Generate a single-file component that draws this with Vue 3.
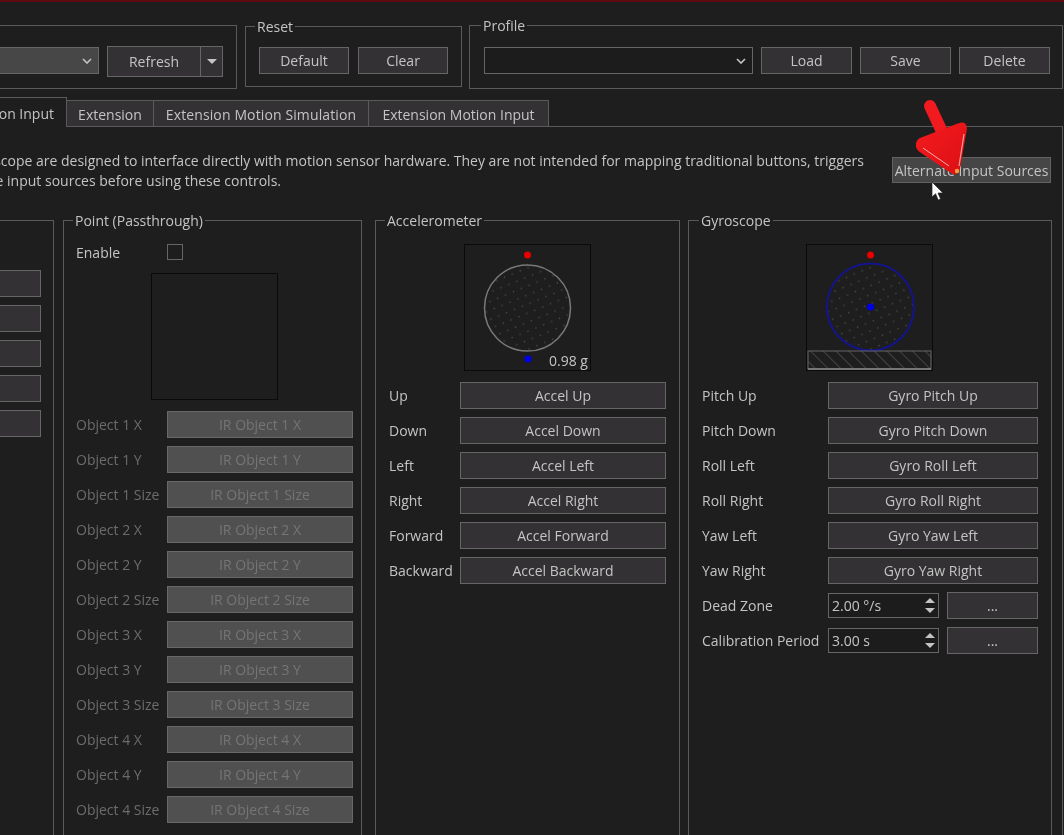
<template>
  <div class="app">
    <div class="top">
      <section class="group devices">
        <span class="title">Device</span>
        <div class="combo lit"><svg class="chev" width="10" height="6" viewBox="0 0 10 6"><polyline points="1,1 5,5 9,1" /></svg></div>
        <div class="split">
          <button class="btn split-main">Refresh</button>
          <button class="btn split-arrow"><svg width="10" height="5" viewBox="0 0 10 5"><polygon points="0,0 10,0 5,5" /></svg></button>
        </div>
      </section>
      <section class="group reset">
        <span class="title">Reset</span>
        <button class="btn">Default</button>
        <button class="btn">Clear</button>
      </section>
      <section class="group profile">
        <span class="title">Profile</span>
        <div class="combo"><svg class="chev" width="10" height="6" viewBox="0 0 10 6"><polyline points="1,1 5,5 9,1" /></svg></div>
        <button class="btn">Load</button>
        <button class="btn">Save</button>
        <button class="btn">Delete</button>
      </section>
    </div>

    <div class="tabs">
      <div class="tab active">Motion Input</div>
      <div class="tab w1">Extension</div>
      <div class="tab w2">Extension Motion Simulation</div>
      <div class="tab w3">Extension Motion Input</div>
    </div>

    <div class="pane">
      <div class="intro">
        <div class="copy">
          <div class="line l1">The Accelerometer and Gyroscope are designed to interface directly with motion sensor hardware. They are not intended for mapping traditional buttons, triggers</div>
          <div class="line l2">or axes. You might need to configure alternate input sources before using these controls.</div>
        </div>
        <button class="btn alt">Alternate Input Sources</button>
      </div>

      <div class="columns">
        <section class="group col-tilt">
          <div class="tilt-list">
            <button v-for="(t, i) in tiltRows" :key="i" class="btn tilt-btn">{{ t }}</button>
          </div>
        </section>

        <section class="group col-point">
          <span class="title">Point (Passthrough)</span>
          <div class="enable">
            <span class="lbl">Enable</span>
            <span class="check"></span>
          </div>
          <div class="vis point-vis"></div>
          <div class="rows">
            <div v-for="o in irRows" :key="o" class="row off">
              <span class="lbl">{{ o }}</span>
              <button class="btn" disabled>IR {{ o }}</button>
            </div>
          </div>
        </section>

        <section class="group col-accel">
          <span class="title">Accelerometer</span>
          <div class="vis">
            <svg width="125" height="125" viewBox="0 0 125 125">
              <defs>
                <pattern id="dotsA" width="13" height="11" patternUnits="userSpaceOnUse" patternTransform="rotate(18)">
                  <circle cx="2" cy="2" r=".7" fill="#565656" />
                  <circle cx="8.5" cy="7.5" r=".7" fill="#565656" />
                </pattern>
              </defs>
              <circle cx="62.5" cy="63" r="43" fill="url(#dotsA)" stroke="#787878" stroke-width="1.5" />
              <circle cx="62.5" cy="10" r="3.5" fill="#e80000" />
              <circle cx="63" cy="114" r="3.5" fill="#0000e8" />
            </svg>
            <span class="gval">0.98 g</span>
          </div>
          <div class="rows">
            <div v-for="r in accelRows" :key="r" class="row">
              <span class="lbl">{{ r }}</span>
              <button class="btn">Accel {{ r }}</button>
            </div>
          </div>
        </section>

        <section class="group col-gyro">
          <span class="title">Gyroscope</span>
          <div class="vis">
            <svg width="125" height="125" viewBox="0 0 125 125">
              <defs>
                <pattern id="dotsG" width="13" height="11" patternUnits="userSpaceOnUse" patternTransform="rotate(18)">
                  <circle cx="2" cy="2" r=".7" fill="#565656" />
                  <circle cx="8.5" cy="7.5" r=".7" fill="#565656" />
                </pattern>
                <pattern id="hatch" width="9" height="9" patternUnits="userSpaceOnUse" patternTransform="rotate(45)">
                  <line x1="0" y1="0" x2="9" y2="0" stroke="#5c5c5c" stroke-width="1.2" />
                </pattern>
              </defs>
              <circle cx="63.5" cy="62" r="43.5" fill="url(#dotsG)" stroke="#14148c" stroke-width="2" />
              <circle cx="63.5" cy="10" r="3.5" fill="#e80000" />
              <circle cx="63.5" cy="62" r="3.5" fill="#0000e8" />
              <rect x="1" y="106" width="123" height="18" fill="url(#hatch)" stroke="#666" />
              <line x1="1" y1="124" x2="124" y2="124" stroke="#888" stroke-width="1.5" />
            </svg>
          </div>
          <div class="rows">
            <div v-for="r in gyroRows" :key="r" class="row">
              <span class="lbl">{{ r }}</span>
              <button class="btn">Gyro {{ r }}</button>
            </div>
            <div v-for="s in spinRows" :key="s.label" class="row">
              <span class="lbl">{{ s.label }}</span>
              <div class="spin">
                {{ s.value }}
                <svg class="spin-arrows" width="10" height="15" viewBox="0 0 10 15">
                  <polygon points="5,0 10,5 0,5" />
                  <polygon points="0,10 10,10 5,15" />
                </svg>
              </div>
              <button class="btn more">...</button>
            </div>
          </div>
        </section>
      </div>
    </div>

    <svg class="pointer-arrow" width="60" height="84" viewBox="0 0 60 84">
      <defs>
        <linearGradient id="red" x1="0" y1="0" x2="1" y2="1">
          <stop offset="0" stop-color="#f41a1e" />
          <stop offset="1" stop-color="#dc1014" />
        </linearGradient>
      </defs>
      <line x1="14" y1="10" x2="29" y2="42" stroke="#f01a1f" stroke-width="12" stroke-linecap="round" />
      <path d="M4 44 Q-1 49 4 54 L35 75 Q40 79 42 74 L49 34 Q50 26 43 29 Z" fill="url(#red)" stroke="url(#red)" stroke-width="3.5" stroke-linejoin="round" />
      <path d="M7 52 L33 70" stroke="#ffb0b0" stroke-width="1" fill="none" />
      <path d="M48 38 L43 70" stroke="#ff9c9c" stroke-width="1.2" fill="none" />
      <circle cx="41" cy="75" r="2.2" fill="#e8a040" />
    </svg>

    <svg class="cursor" width="14" height="21" viewBox="0 0 14 21">
      <path d="M1 1 L1 16 L4.6 12.8 L7.2 19 L9.6 18 L7 12 L12 12 Z" fill="#fff" stroke="#222" stroke-width=".7" />
    </svg>
  </div>
</template>

<script setup>
const tiltRows = ['', '.', '.', '.', '.']
const accelRows = ['Up', 'Down', 'Left', 'Right', 'Forward', 'Backward']
const gyroRows = ['Pitch Up', 'Pitch Down', 'Roll Left', 'Roll Right', 'Yaw Left', 'Yaw Right']
const spinRows = [
  { label: 'Dead Zone', value: '2.00 °/s' },
  { label: 'Calibration Period', value: '3.00 s' },
]
const irRows = []
for (let i = 1; i <= 4; i++) {
  irRows.push(`Object ${i} X`, `Object ${i} Y`, `Object ${i} Size`)
}
</script>

<style>
html, body { background: #1e1e1e; overflow: hidden; }
</style>

<style scoped>
.app {
  position: relative;
  width: 1064px;
  height: 835px;
  overflow: hidden;
  box-sizing: border-box;
  border-top: 2px solid #5e0a10;
  background: #1e1e1e;
  color: #c4c4c4;
  font: 14px/19px "Open Sans", "Noto Sans", sans-serif;
  filter: blur(.35px);
}
.top { display: flex; margin: 23px 1px 0 -120px; height: 65px; }
.group { position: relative; box-sizing: border-box; border: 1px solid #5a5a5a; }
.title { position: absolute; top: -10px; left: 9px; padding: 0 2px; background: #1e1e1e; }
.btn {
  box-sizing: border-box;
  height: 27px;
  padding: 0;
  border: 1px solid #666;
  background: #333133;
  color: inherit;
  font: inherit;
  text-align: center;
}
.combo {
  position: relative;
  box-sizing: border-box;
  height: 27px;
  border: 1px solid #666;
  background: #1c1c1c;
}
.combo.lit { background: #474747; }
.chev { position: absolute; right: 6px; top: 10px; fill: none; stroke: #c4c4c4; stroke-width: 1.6; }

.devices { width: 357px; height: 64px; display: flex; gap: 8px; padding: 21px 13px 0 0; margin-right: 8px; }
.devices .combo { width: 219px; }
.split { display: flex; height: 31px; margin-top: -1px; }
.split .btn { height: 31px; }
.split-main { width: 94px; }
.split-arrow { width: 23px; margin-left: -1px; fill: #c4c4c4; display: flex; align-items: center; justify-content: center; }

.reset { width: 217px; height: 61px; margin: 1px 7px 0 0; display: flex; gap: 9px; padding: 20px 0 0 13px; }
.reset .btn { width: 90px; }
.profile { flex: 1; height: 64px; display: flex; gap: 8px; padding: 21px 0 0 14px; }
.profile .title { left: 11px; }
.profile .combo { width: 269px; }
.profile .btn { width: 91px; }

.tabs { display: flex; align-items: flex-end; margin: 8px 0 0 -120px; height: 29px; position: relative; z-index: 1; }
.tab { box-sizing: border-box; height: 27px; border: 1px solid #5a5a5a; border-left: 0; background: #333133; text-align: center; line-height: 27px; white-space: nowrap; }
.tab.active { width: 187px; height: 30px; background: #1e1e1e; border-bottom: 0; line-height: 32px; text-align: right; padding-right: 12px; border-left: 1px solid #5a5a5a; }
.tab.w1 { width: 87px; }
.tab.w2 { width: 215px; letter-spacing: .12px; }
.tab.w3 { width: 180px; }

.pane { box-sizing: border-box; margin: -1px 1px 0 -120px; height: 720px; border: 1px solid #5a5a5a; }
.intro { position: relative; display: flex; height: 93px; }
.copy { width: 983px; padding-top: 24px; flex: none; }
.line { display: flex; justify-content: flex-end; white-space: nowrap; height: 20px; }
.l2 { padding-right: 583px; }
.alt { width: 159px; height: 26px; margin: 30px 0 0 28px; background: #464646; border-color: #626262; white-space: nowrap; }

.columns { display: flex; height: 640px; }
.columns .group { height: 640px; }
.col-tilt { width: 173px; margin-right: 9px; padding: 49px 0 0 0; }
.tilt-list { display: flex; flex-direction: column; gap: 8px; }
.tilt-btn { width: 159px; text-align: right; padding-right: 40px; color: #a98a5c; }
.col-point { width: 299px; margin-right: 13px; padding: 22px 0 0 12px; }
.enable { display: flex; height: 19px; align-items: center; }
.enable .lbl { width: 91px; }
.check { width: 14px; height: 14px; border: 1px solid #666; margin-top: -2px; }
.vis { position: relative; box-sizing: border-box; width: 127px; height: 127px; border: 1px solid #0a0a0a; }
.vis svg { display: block; }
.point-vis { margin: 11px 0 0 75px; }
.col-accel { width: 305px; margin-right: 8px; padding: 23px 0 0 13px; }
.col-accel .vis { margin: 0 0 0 75px; }
.gval { position: absolute; left: 84px; top: 106px; white-space: nowrap; }
.col-gyro { width: 364px; padding: 23px 0 0 13px; }
.col-gyro > .title { left: 10px; }
.col-gyro .vis { margin: 0 0 0 104px; }

.rows { display: flex; flex-direction: column; gap: 8px; margin-top: 11px; }
.row { display: flex; align-items: center; height: 27px; }
.col-point .row .lbl { width: 91px; white-space: nowrap; }
.col-point .row .btn { width: 186px; }
.col-accel .row .lbl { width: 71px; }
.col-accel .row .btn { width: 206px; }
.col-gyro .row .lbl { width: 126px; white-space: nowrap; }
.col-gyro .row > .btn { width: 210px; }
.col-gyro .row > .btn.more { width: 91px; margin-left: 8px; }
.off .lbl { color: #6c6c6c; }
.off .btn { background: #505050; border-color: #686868; color: #757575; }

.spin {
  position: relative;
  box-sizing: border-box;
  width: 111px;
  height: 25px;
  border: 1px solid #666;
  background: #1c1c1c;
  padding-left: 3px;
  line-height: 23px;
}
.spin-arrows { position: absolute; right: 3px; top: 4px; fill: #c4c4c4; }

.pointer-arrow { position: absolute; left: 916px; top: 94px; }
.cursor { position: absolute; left: 931px; top: 179px; }
</style>
